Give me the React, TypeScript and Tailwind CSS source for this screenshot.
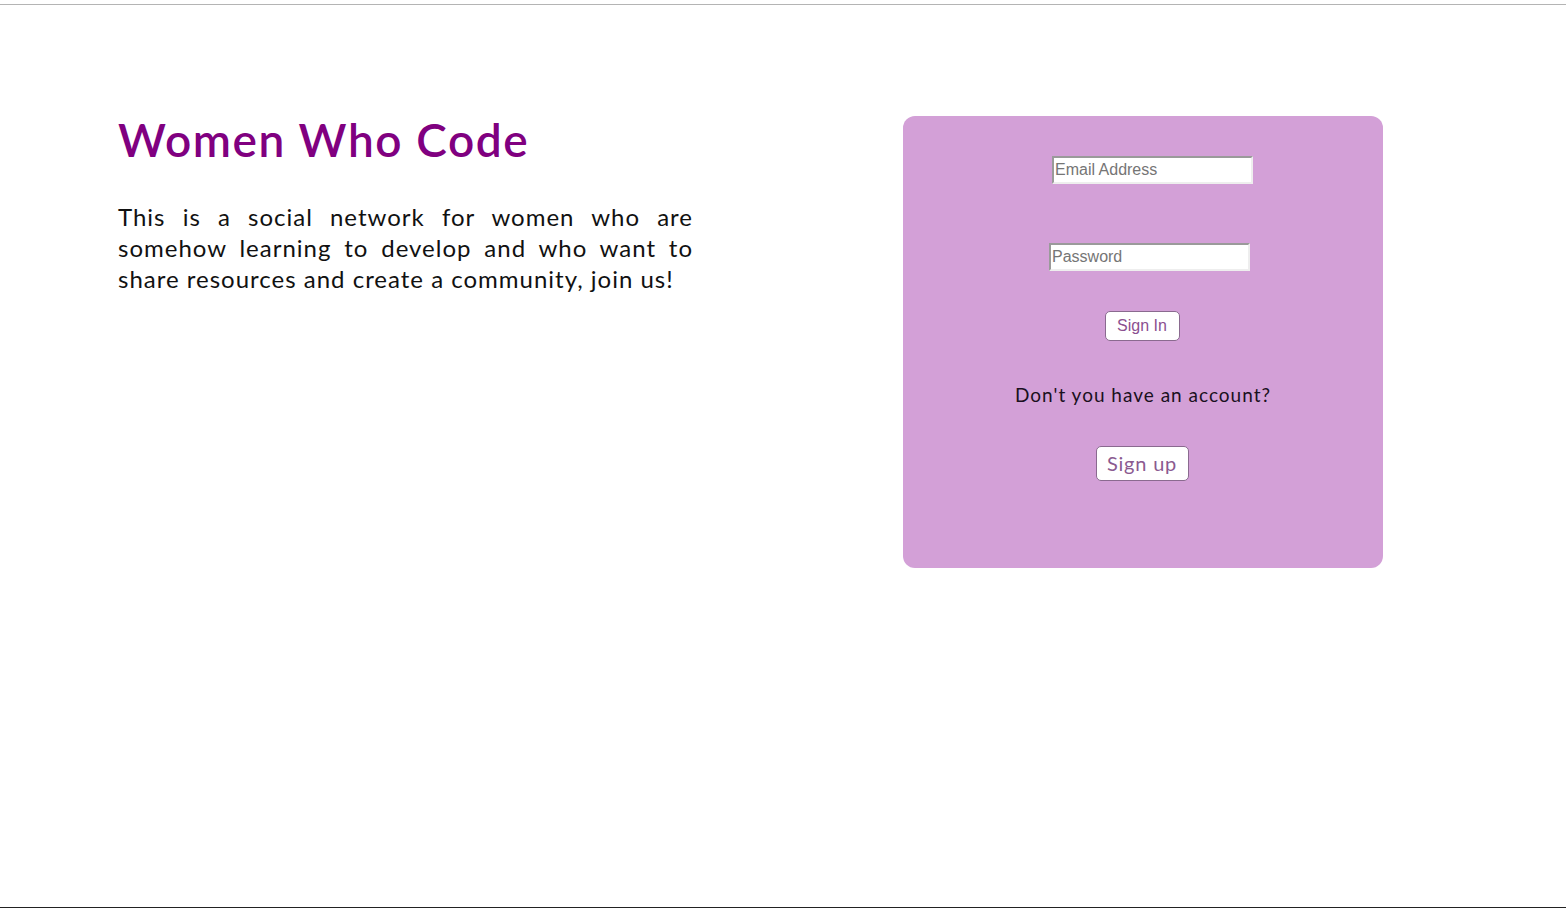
import React from "react";

export default function App() {
  return (
    <div className="w-full h-[908px] bg-white flex flex-col overflow-hidden">
      <div className="h-[4px] shrink-0" />
      <div className="h-px bg-[#b4b4b4] shrink-0" />
      <div className="flex flex-1 pl-[118px] pt-[107px]">
        <div className="w-[575px] shrink-0">
          <h1 className="text-[46px] leading-[1.2] font-semibold text-[#800080] [font-family:Lato,'Noto_Sans',sans-serif] tracking-[1.6px]">
            Women Who Code
          </h1>
          <p className="mt-[34px] text-[24px] leading-[31px] text-[#111] text-justify [font-family:Lato,'Noto_Sans',sans-serif] tracking-[1px]">
            This is a social network for women who are somehow learning to develop and who want to share resources and create a community, join us!
          </p>
        </div>
        <div className="ml-[210px] mt-[4px] w-[480px] h-[452px] shrink-0 rounded-[12px] bg-[#d3a0d7] flex flex-col items-center pt-[40px]">
          <input
            placeholder="Email Address"
            className="ml-[19px] w-[201px] h-[28px] bg-white border-2 border-t-[#9a9a9a] border-l-[#9a9a9a] border-b-[#eeeeee] border-r-[#eeeeee] px-[1px] text-[16px] text-[#333] placeholder:text-[#757575] outline-none [font-family:'Liberation_Sans',Arial,sans-serif]"
          />
          <input
            type="password"
            placeholder="Password"
            className="mt-[59px] ml-[13px] w-[201px] h-[28px] bg-white border-2 border-t-[#9a9a9a] border-l-[#9a9a9a] border-b-[#eeeeee] border-r-[#eeeeee] px-[1px] text-[16px] text-[#333] placeholder:text-[#757575] outline-none [font-family:'Liberation_Sans',Arial,sans-serif]"
          />
          <button className="mt-[40px] mr-[2px] w-[75px] h-[30px] bg-white border border-[#8a6a8f] rounded-[5px] text-[16px] text-[#8b4f90] [font-family:'Liberation_Sans',Arial,sans-serif]">
            Sign In
          </button>
          <p className="mt-[40px] text-[19px] text-[#1a1020] [font-family:Lato,'Noto_Sans',sans-serif] tracking-[1px]">
            Don't you have an account?
          </p>
          <button className="mt-[36px] mr-[2px] w-[93px] h-[35px] bg-white border border-[#8a6a8f] rounded-[5px] text-[20px] text-[#8b5a90] [font-family:Lato,'Noto_Sans',sans-serif] tracking-[0.8px]">
            Sign up
          </button>
        </div>
      </div>
      <div className="h-px bg-[#222] shrink-0" />
    </div>
  );
}
